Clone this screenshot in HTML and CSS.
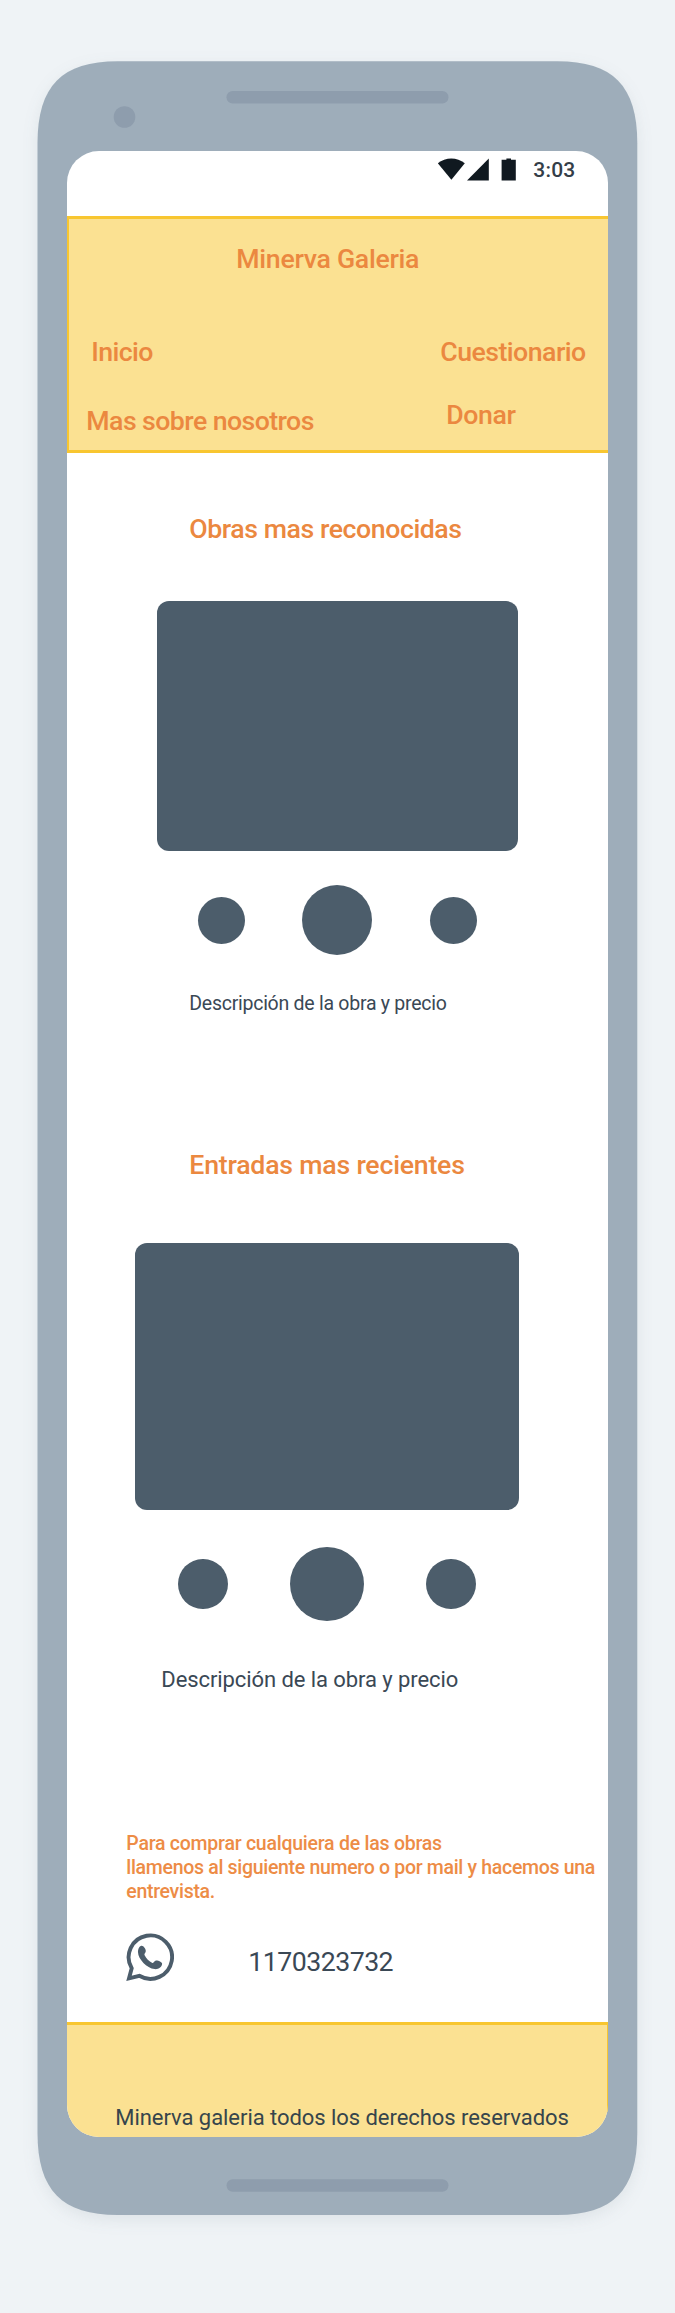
FILE: index.html
```html
<!DOCTYPE html>
<html lang="es">
<head>
<meta charset="utf-8">
<title>Minerva Galeria</title>
<link rel="stylesheet" href="styles.css">
</head>
<body>
<div class="stage">
  <svg class="device" viewBox="0 0 675 2313" aria-hidden="true">
    <path class="device-body" d="M37.5 143.3C37.5 86 62 61.3 117.5 61.3H557.3C613 61.3 637.3 86 637.3 143.3V2133C637.3 2190.3 613 2215 557.3 2215H117.5C62 2215 37.5 2190.3 37.5 2133Z"/>
    <rect class="device-detail" x="226.5" y="91" width="222" height="12.5" rx="6.2"/>
    <circle class="device-detail" cx="124.5" cy="117" r="10.8"/>
    <rect class="device-detail" x="226.5" y="2179.2" width="222" height="12.5" rx="6.2"/>
  </svg>
  <main class="screen">
    <div class="status">
      <svg class="status-icons" viewBox="0 0 80 24" aria-hidden="true">
        <path d="M0.8 5.2C8.5-1.2 20-1.2 27.8 5.2L14.4 21.8Z"/>
        <path d="M51.8 0.6V22.4H30Z"/>
        <path d="M64.6 1.8H69.4V0.6H74V1.8H78.8V22.4H64.6Z"/>
      </svg>
      <span class="clock">3:03</span>
    </div>
    <header class="header">
      <h1 class="brand">Minerva Galeria</h1>
      <nav class="nav">
        <div class="nav-left">
          <a class="link home">Inicio</a>
          <a class="link about">Mas sobre nosotros</a>
        </div>
        <div class="nav-right">
          <a class="link quiz">Cuestionario</a>
          <a class="link donate">Donar</a>
        </div>
      </nav>
    </header>
    <section class="works">
      <h2 class="heading">Obras mas reconocidas</h2>
      <div class="picture"></div>
      <div class="dots"><i class="dot"></i><i class="dot big"></i><i class="dot"></i></div>
      <p class="caption">Descripción de la obra y precio</p>
    </section>
    <section class="entries">
      <h2 class="heading">Entradas mas recientes</h2>
      <div class="picture"></div>
      <div class="dots"><i class="dot"></i><i class="dot big"></i><i class="dot"></i></div>
      <p class="caption">Descripción de la obra y precio</p>
    </section>
    <section class="contact">
      <p class="note"><span class="line1">Para comprar cualquiera de las obras</span><br><span class="line2">llamenos al siguiente numero o por mail y hacemos una</span><br><span class="line3">entrevista.</span></p>
      <div class="phone">
        <svg class="whatsapp" viewBox="0 0 48 49" aria-hidden="true">
          <path class="bubble" d="M5.7 35.2A21.7 21.7 0 1 1 13.3 42.8L3 45.4Z"/>
          <path class="handset" d="M15.4 12.8C17.6 12.5 19.8 16 19.8 18C19.8 20 17.9 20.6 18.5 21.9C20.2 25.3 23 28.4 26.4 29.9C27.8 30.5 28.2 27.7 30 27.5C32 27.3 36 28.8 36.1 30.6C36.2 34.4 32.2 36.5 28.6 36.1C20.8 35.2 12.2 26 12 19.2C11.9 16.2 13.4 13 15.4 12.8Z"/>
        </svg>
        <span class="number">1170323732</span>
      </div>
    </section>
    <footer class="footer">Minerva galeria todos los derechos reservados</footer>
  </main>
</div>
</body>
</html>
```
FILE: styles.css
```css
* { box-sizing: border-box; margin: 0; padding: 0; }

body {
  background: #eff3f6;
  font-family: Roboto, "Liberation Sans", sans-serif;
}

.stage {
  display: grid;
  width: 675px;
  height: 2313px;
  overflow: hidden;
}

.device, .screen { grid-area: 1 / 1; }

.device {
  width: 675px;
  height: 2313px;
  filter: drop-shadow(0 5px 8px rgba(60, 75, 90, 0.09));
}
.device-body { fill: #9eadba; }
.device-detail { fill: #8e9dad; }

.screen {
  z-index: 1;
  display: flex;
  flex-direction: column;
  width: 540.4px;
  height: 1986px;
  margin: 151.3px 0 0 67.3px;
  overflow: hidden;
  border-radius: 32px;
  background: #fff;
  white-space: nowrap;
}

/* Status bar */
.status {
  display: flex;
  height: 65px;
  padding: 7px 0 0 370px;
}
.status-icons { width: 80px; height: 24px; fill: #101920; }
.clock {
  margin-left: 16px;
  font-size: 21px;
  font-weight: 500;
  line-height: 24px;
  letter-spacing: 0.2px;
  color: #343e48;
}

/* Header */
.header {
  height: 237px;
  border: solid #f8c630;
  border-width: 3px 0 3px 2px;
  background: #fbe192;
  color: #eb8840;
}
.brand, .link, .heading {
  display: block;
  font-size: 26.7px;
  font-weight: 500;
  line-height: 32px;
}
.brand {
  padding: 24px 0 0 167px;
  letter-spacing: -0.3px;
}
.nav {
  display: grid;
  grid-template-columns: 371px 1fr;
  margin-top: 60.5px;
}
.home { padding-left: 22px; letter-spacing: -0.6px; }
.about { margin-top: 37px; padding-left: 17px; letter-spacing: -0.57px; }
.quiz { letter-spacing: -0.53px; }
.donate { margin-top: 31px; padding-left: 6px; letter-spacing: -0.4px; }

/* Gallery sections */
.works { height: 562px; padding: 59.5px 0 0 90px; }
.entries { height: 678px; padding: 134px 0 0 68px; }
.heading { color: #eb8840; }
.works .heading { margin-left: 32px; letter-spacing: -0.44px; }
.entries .heading { margin-left: 54px; letter-spacing: -0.22px; }

.picture { border-radius: 12px; background: #4c5d6b; }
.works .picture { width: 360.5px; height: 250px; margin-top: 56.5px; }
.entries .picture { width: 383.5px; height: 267px; margin-top: 62px; }

.dots {
  display: flex;
  align-items: center;
  justify-content: space-between;
}
.works .dots { width: 279.5px; margin: 34.2px 0 0 40.3px; }
.entries .dots { width: 297.5px; margin: 36.7px 0 0 43px; }
.dot { border-radius: 50%; background: #4c5d6b; }
.works .dot { width: 47px; height: 47px; }
.works .dot.big { width: 70px; height: 70px; }
.entries .dot { width: 49.5px; height: 50px; }
.entries .dot.big { width: 74.2px; height: 74.5px; }

.caption { color: #3a4855; }
.works .caption {
  margin: 36.5px 0 0 32px;
  font-size: 19.5px;
  line-height: 24px;
  letter-spacing: -0.26px;
}
.entries .caption {
  margin: 45.2px 0 0 26px;
  font-size: 22px;
  line-height: 26px;
  letter-spacing: -0.08px;
}

/* Contact */
.contact { height: 329px; padding: 138.5px 0 0 59px; }
.note {
  font-size: 19.5px;
  font-weight: 500;
  line-height: 24px;
  color: #ed8c46;
}
.line1 { letter-spacing: -0.24px; }
.line2 { letter-spacing: -0.31px; }
.line3 { letter-spacing: -0.3px; }
.phone { display: flex; margin-top: 29.5px; }
.whatsapp { width: 48px; height: 49px; }
.bubble { fill: none; stroke: #4c5d6b; stroke-width: 3.9; }
.handset { fill: #4c5d6b; }
.number {
  margin: 13px 0 0 74px;
  font-size: 26.7px;
  line-height: 32px;
  letter-spacing: -0.52px;
  color: #3a4855;
}

/* Footer */
.footer {
  flex: 1;
  padding: 79.5px 0 0 48px;
  border: solid #f8c630;
  border-width: 3px 1px 0 0;
  background: #fbe192;
  font-size: 22px;
  line-height: 26px;
  letter-spacing: -0.05px;
  color: #36454c;
}
```
